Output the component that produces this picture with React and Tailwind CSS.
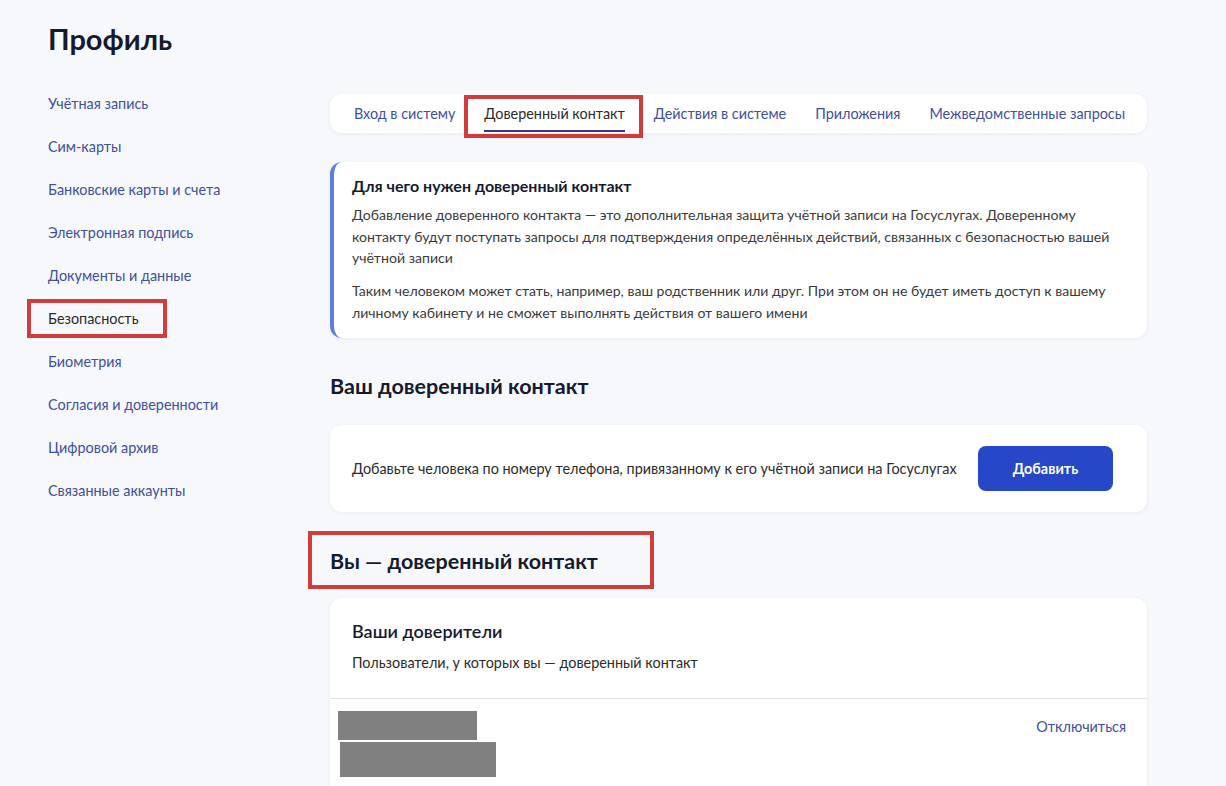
import React from "react";

const sideItems = [
  "Учётная запись",
  "Сим-карты",
  "Банковские карты и счета",
  "Электронная подпись",
  "Документы и данные",
  "Безопасность",
  "Биометрия",
  "Согласия и доверенности",
  "Цифровой архив",
  "Связанные аккаунты",
];

const tabs = [
  "Вход в систему",
  "Доверенный контакт",
  "Действия в системе",
  "Приложения",
  "Межведомственные запросы",
];

export default function App() {
  return (
    <div className="min-h-screen bg-[#f7f8fb] text-[#1f2235]" style={{ fontFamily: "Lato, 'Noto Sans', sans-serif" }}>
      <div className="pl-[48px] pt-[21px]">
        <h1 className="text-[29px] leading-[36px] font-bold text-[#161a2e]">Профиль</h1>
      </div>
      <div className="flex pl-[48px] pt-[25px]">
        <nav className="w-[282px] shrink-0 flex flex-col">
          {sideItems.map((item) => (
            <div key={item} className="relative h-[43px] flex items-center text-[14.4px] whitespace-nowrap">
              <span className={item === "Безопасность" ? "text-[#2b2b2b]" : "text-[#40509e]"}>{item}</span>
              {item === "Безопасность" && (
                <span className="absolute left-[-21px] top-[2px] w-[140px] h-[39px] border-4 border-[#d13c3c]"></span>
              )}
            </div>
          ))}
        </nav>
        <main className="w-[817px] shrink-0 pt-[12px] pb-10">
          <div className="bg-white rounded-[12px] h-[39px] flex items-center gap-[29px] px-6 shadow-[0_1px_4px_rgba(30,40,90,0.06)]">
            {tabs.map((t) => {
              const active = t === "Доверенный контакт";
              return (
                <div key={t} className="relative h-[39px] shrink-0 flex items-center text-[14.4px] whitespace-nowrap">
                  <span className={active ? "text-[#2b2b2b]" : "text-[#40509e]"}>{t}</span>
                  {active && (
                    <>
                      <span className="absolute left-0 right-0 bottom-[1px] h-[2px] bg-[#3a3584]"></span>
                      <span className="absolute left-[-20px] top-[1px] w-[179px] h-[43px] border-4 border-[#d13c3c]"></span>
                    </>
                  )}
                </div>
              );
            })}
          </div>

          <div className="mt-[29px] bg-white rounded-[12px] border-l-4 border-[#5b7fe0] pl-[18px] pr-[20px] pt-[14px] pb-[15px] shadow-[0_1px_4px_rgba(30,40,90,0.06)]">
            <div className="text-[16px] leading-[20px] font-bold text-[#161a2e]">Для чего нужен доверенный контакт</div>
            <p className="mt-[8px] text-[14.1px] leading-[21.5px] text-[#3a3a3a]">
              Добавление доверенного контакта — это дополнительная защита учётной записи на Госуслугах. Доверенному
              <br />
              контакту будут поступать запросы для подтверждения определённых действий, связанных с безопасностью вашей учётной записи
            </p>
            <p className="mt-[11.5px] text-[14.1px] leading-[21.5px] text-[#3a3a3a]">
              Таким человеком может стать, например, ваш родственник или друг. При этом он не будет иметь доступ к вашему личному кабинету и не сможет выполнять действия от вашего имени
            </p>
          </div>

          <h2 className="mt-[34px] text-[21.5px] leading-[28px] font-bold text-[#161a2e]">Ваш доверенный контакт</h2>

          <div className="mt-[25px] bg-white rounded-[12px] pl-[22px] pr-[34px] py-[21px] flex items-center justify-between shadow-[0_1px_4px_rgba(30,40,90,0.06)]">
            <span className="text-[14.4px] text-[#2b2b2b]">Добавьте человека по номеру телефона, привязанному к его учётной записи на Госуслугах</span>
            <button className="w-[135px] h-[45px] shrink-0 rounded-[8px] bg-[#2547c8] text-white text-[14.4px] font-bold">Добавить</button>
          </div>

          <div className="relative mt-[35px] w-fit">
            <h2 className="text-[21.5px] leading-[28px] font-bold text-[#161a2e]">Вы — доверенный контакт</h2>
            <span className="absolute left-[-22px] top-[-16px] w-[346px] h-[58px] border-4 border-[#d13c3c]"></span>
          </div>

          <div className="mt-[23px] bg-white rounded-[12px] shadow-[0_1px_4px_rgba(30,40,90,0.06)]">
            <div className="px-[22px] pt-[21px] pb-[25px]">
              <div className="text-[18px] leading-[24px] font-semibold text-[#161a2e]">Ваши доверители</div>
              <div className="mt-[10px] text-[14.4px] leading-[20px] text-[#2b2b2b]">Пользователи, у которых вы — доверенный контакт</div>
            </div>
            <div className="border-t border-[#e1e3e8] flex justify-between pl-[8px] pr-[21px] pt-[12px] pb-[20px]">
              <div className="flex flex-col gap-[2px]">
                <div className="w-[139px] h-[29px] bg-[#808080]"></div>
                <div className="ml-[2px] w-[156px] h-[35px] bg-[#808080]"></div>
              </div>
              <span className="text-[14.4px] text-[#40509e] mt-[5px]">Отключиться</span>
            </div>
          </div>
        </main>
      </div>
    </div>
  );
}
